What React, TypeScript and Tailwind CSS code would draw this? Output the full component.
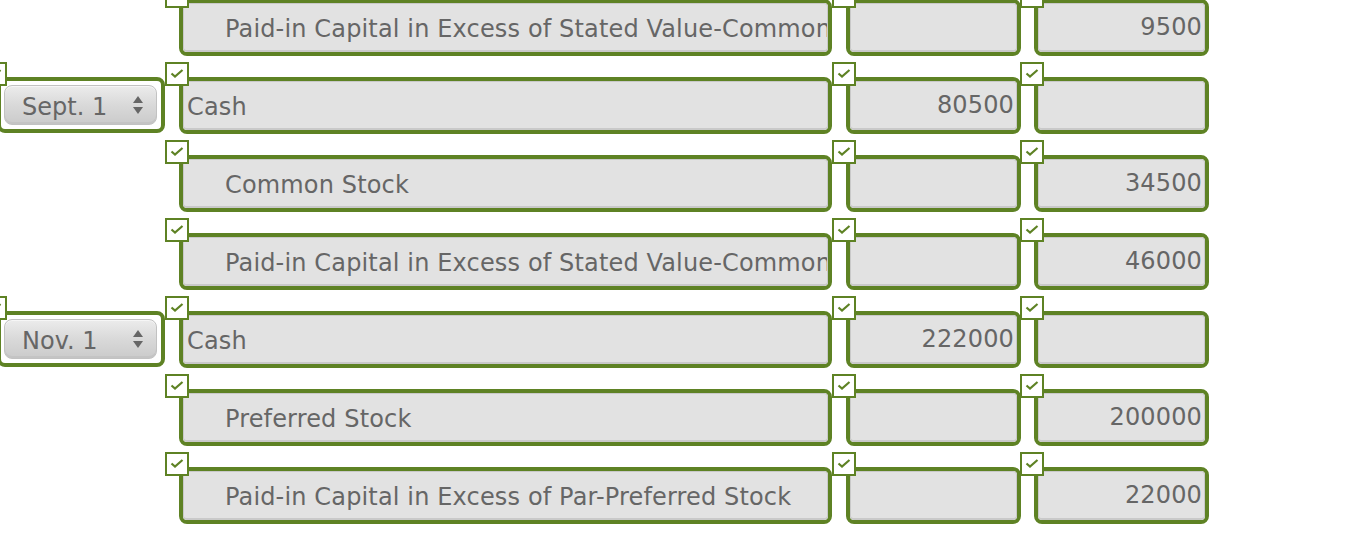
import React from 'react';

interface Row {
  date?: string;
  account: string;
  indent: boolean;
  debit: string;
  credit: string;
}

const rows: Row[] = [
  { account: 'Paid-in Capital in Excess of Stated Value-Common', indent: true, debit: '', credit: '9500' },
  { date: 'Sept. 1', account: 'Cash', indent: false, debit: '80500', credit: '' },
  { account: 'Common Stock', indent: true, debit: '', credit: '34500' },
  { account: 'Paid-in Capital in Excess of Stated Value-Common', indent: true, debit: '', credit: '46000' },
  { date: 'Nov. 1', account: 'Cash', indent: false, debit: '222000', credit: '' },
  { account: 'Preferred Stock', indent: true, debit: '', credit: '200000' },
  { account: 'Paid-in Capital in Excess of Par-Preferred Stock', indent: true, debit: '', credit: '22000' },
];

function Check() {
  return (
    <div className="absolute -left-[14px] -top-[15px] z-10 w-[24px] h-[24px] bg-white border-2 border-[#5e8224] flex items-center justify-center">
      <svg width="14" height="12" viewBox="0 0 14 12">
        <path d="M1.5 5.5 L5 8.5 L12.5 2" fill="none" stroke="#5e8224" strokeWidth="2.2" />
      </svg>
    </div>
  );
}

function Field({ width, children, right }: { width: string; children?: React.ReactNode; right?: boolean }) {
  return (
    <div className={`relative h-[57px] ${width}`}>
      <Check />
      <div className="h-full rounded-[8px] border-4 border-[#5e8224]">
        <div
          className={`h-full rounded-[4px] border border-b-2 border-[#c9c9c9] bg-[#e2e2e2] flex items-center overflow-hidden whitespace-nowrap text-[24px] tracking-[0.15px] text-[#666] ${
            right ? 'justify-end pr-[2px]' : ''
          }`}
        >
          {children}
        </div>
      </div>
    </div>
  );
}

function DateBox({ label }: { label: string }) {
  return (
    <div className="relative h-[56px] w-[168px] ml-[-3px]">
      <Check />
      <div className="h-full rounded-[8px] border-4 border-[#5e8224] bg-white flex items-center pl-[3px]">
        <div className="h-[40px] w-[153px] rounded-[8px] border border-[#c2c2c2] bg-gradient-to-b from-[#ececec] via-[#d9d9d9] to-[#cbcbcb] shadow-[inset_0_1px_0_#f6f6f6,inset_0_-2px_0_#c4c4c4] flex items-center justify-between pl-[17px] pr-[12px] text-[24px] text-[#666]">
          <span className="pt-[3px]">{label}</span>
          <svg width="12" height="20" viewBox="0 0 12 20">
            <path d="M6 1 L11 8 L1 8 Z" fill="#666" />
            <path d="M1 12 L11 12 L6 19 Z" fill="#666" />
          </svg>
        </div>
      </div>
    </div>
  );
}

export default function App() {
  return (
    <div className="w-[1348px] h-[544px] bg-white overflow-hidden" style={{ fontFamily: '"DejaVu Sans", Verdana, sans-serif' }}>
      <div className="mt-[-17px]">
        {rows.map((r, i) => (
          <div key={i} className="h-[78px] pt-[16px] flex">
            <div className="w-[165px] shrink-0">{r.date && <DateBox label={r.date} />}</div>
            <div className="ml-[14px] flex gap-[14px]">
              <Field width="w-[653px]">
                <span className={r.indent ? 'pl-[41px] pt-[3px]' : 'pl-[3px] pt-[3px]'}>{r.account}</span>
              </Field>
              <Field width="w-[175px]" right>
                {r.debit}
              </Field>
              <div className="-ml-[1px]">
                <Field width="w-[175px]" right>
                  {r.credit}
                </Field>
              </div>
            </div>
          </div>
        ))}
      </div>
    </div>
  );
}
